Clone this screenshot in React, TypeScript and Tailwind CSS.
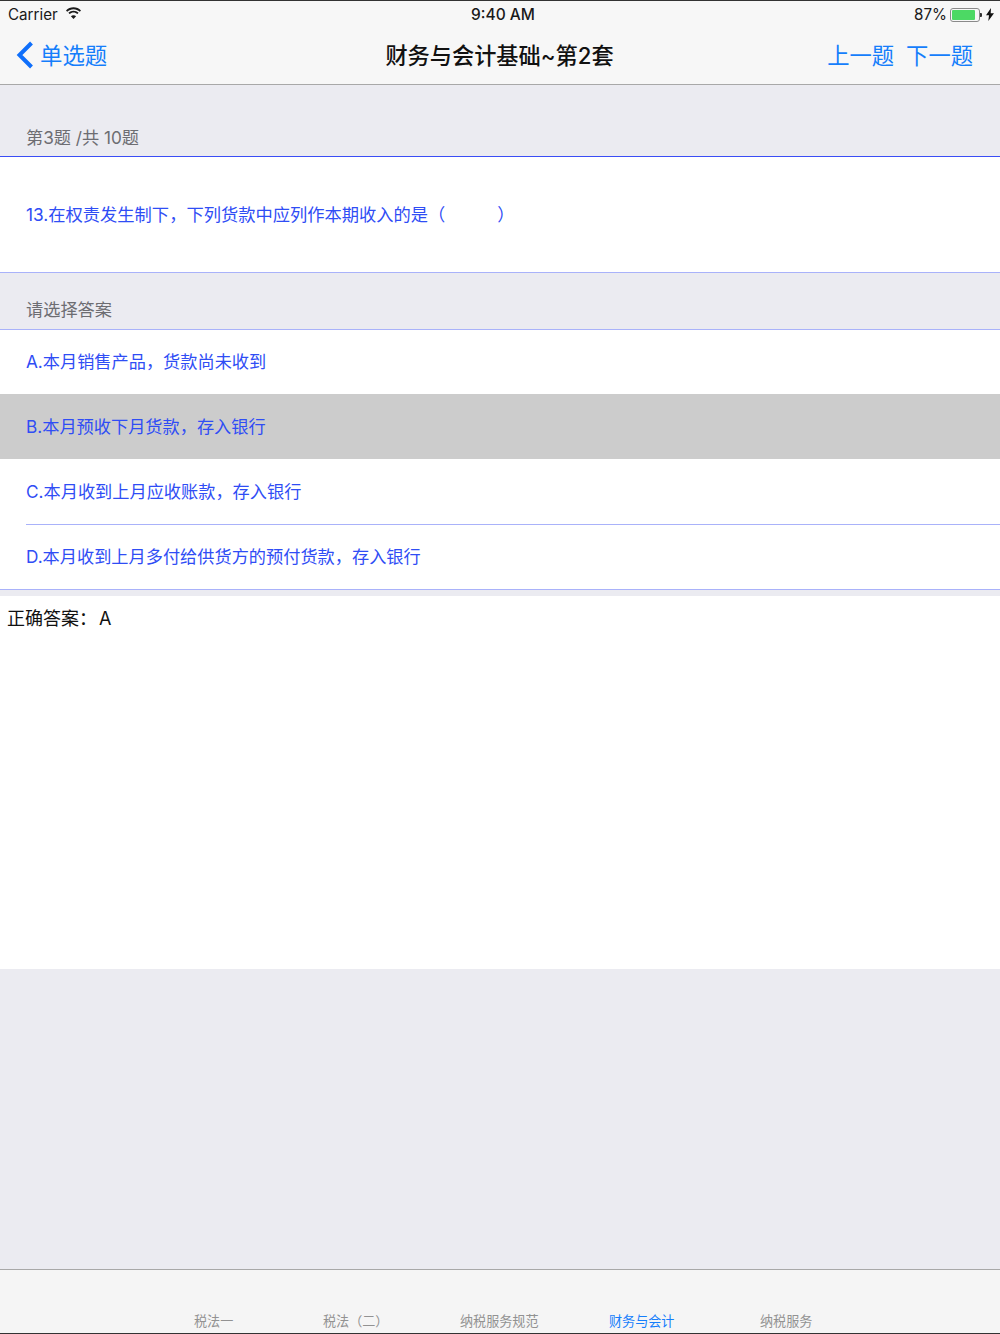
const FONT = "font-['Inter','Noto_Sans_CJK_SC',sans-serif]"

const TABS = [
  { label: '税法一', width: 'w-[40px]', active: false },
  { label: '税法（二）', width: 'w-[64px]', active: false },
  { label: '纳税服务规范', width: 'w-[80px]', active: false },
  { label: '财务与会计', width: 'w-[68px]', active: true },
  { label: '纳税服务', width: 'w-[54px]', active: false },
]

function StatusBar() {
  return (
    <div className="h-[28px] flex items-center justify-between pl-[8px] pr-[6px] text-[15.2px] text-[#1a1a1a]">
      <div className="flex items-center gap-[7px]">
        <span>Carrier</span>
        <svg width="17" height="13" viewBox="0 0 17 13" fill="#1a1a1a" className="-mt-[2px]">
          <path d="M8.5 2.2c2.4 0 4.6.9 6.3 2.5l1.2-1.3C14 1.4 11.4.3 8.5.3S3 1.4 1 3.4l1.2 1.3c1.7-1.6 3.9-2.5 6.3-2.5z" />
          <path d="M8.5 5.6c1.5 0 2.8.6 3.9 1.5l1.2-1.3c-1.4-1.3-3.2-2.1-5.1-2.1S4.800 4.500 3.400 5.800l1.200 1.300c1.100-.9 2.400-1.500 3.900-1.500z" />
          <path d="M8.500 8.300c-1 0-1.900.4-2.600 1l2.600 2.800 2.600-2.800c-.7-.6-1.600-1-2.600-1z" />
        </svg>
      </div>
      <span className="absolute left-[471px] text-[15.500px] font-medium">9:40 AM</span>
      <div className="flex items-center">
        <span>87%</span>
        <div className="ml-[3px] w-[30px] h-[14px] rounded-[3px] border border-[#8a8a8a] p-[1px]">
          <div className="h-full w-[87%] rounded-[1px] bg-[#4cd964]" />
        </div>
        <div className="w-[2px] h-[4px] bg-[#333] rounded-r-[1px] mr-[4px]" />
        <svg width="8" height="13" viewBox="0 0 8 13" fill="#111">
          <path d="M5 0 0 7.300h3L2.300 13 8 5.200H4.700L5 0z" />
        </svg>
      </div>
    </div>
  )
}

function NavBar() {
  return (
    <div className="relative h-[56px] flex items-center justify-between pb-[3px] pl-[16px] pr-[27px]">
      <div className="flex items-center gap-[6px] text-[22.400px] text-[#157efb]">
        <svg width="18" height="28" viewBox="0 0 18 28" fill="none" stroke="#0f6ffb" strokeWidth="4">
          <path d="M15.500 2 3.500 14l12 12" />
        </svg>
        <span>单选题</span>
      </div>
      <span className="absolute left-0 right-0 text-center text-[22.200px] font-medium text-[#111] -ml-[1px]">
        财务与会计基础~第2套
      </span>
      <div className="flex gap-[12px] text-[22.300px] text-[#157efb]">
        <span>上一题</span>
        <span>下一题</span>
      </div>
    </div>
  )
}

function OptionRow({ text, height, selected, divider }: { text: string; height: string; selected?: boolean; divider?: boolean }) {
  return (
    <div className={`${height} ${selected ? 'bg-[#cccccc]' : 'bg-white'} pl-[26px]`}>
      <div className={`h-full flex items-center text-[17.200px] text-[#2f4df5] ${divider ? 'border-b border-[#a9b2fa]' : ''}`}>
        {text}
      </div>
    </div>
  )
}

export default function App() {
  return (
    <div className={`relative w-[1000px] h-[1334px] flex flex-col bg-[#ebebf1] overflow-hidden ${FONT}`}>
      <div className="h-[85px] shrink-0 bg-[#f7f7f7] border-t border-b border-t-[#333] border-b-[#a8a8a8]">
        <StatusBar />
        <NavBar />
      </div>

      <div className="h-[72px] shrink-0 flex items-end pl-[26px] pb-[5px] text-[17.200px] text-[#6d6d72] border-b border-[#3a4df5]">
        第3题 /共 10题
      </div>
      <div className="h-[116px] shrink-0 bg-white flex items-center pl-[26px] pt-[1px] text-[17.280px] text-[#2f4df5] border-b border-[#a9b2fa]">
        13.在权责发生制下，下列货款中应列作本期收入的是（&emsp;&emsp;&emsp;）
      </div>
      <div className="h-[57px] shrink-0 flex items-end pl-[26px] pb-[6px] text-[17.200px] text-[#6d6d72] border-b border-[#a9b2fa]">
        请选择答案
      </div>

      <div className="shrink-0 border-b border-[#a9b2fa]">
        <OptionRow height="h-[64px]" text="A.本月销售产品，货款尚未收到" />
        <OptionRow height="h-[65px]" text="B.本月预收下月货款，存入银行" selected />
        <OptionRow height="h-[66px]" text="C.本月收到上月应收账款，存入银行" divider />
        <div className="h-[64px] bg-white pl-[26px] flex items-center text-[17.200px] text-[#2f4df5]">
          D.本月收到上月多付给供货方的预付货款，存入银行
        </div>
      </div>

      <div className="h-[373px] mt-[6px] shrink-0 bg-white pl-[7px] pt-[9px] text-[18px] text-[#111]">
        正确答案：<span className="ml-[2px]">A</span>
      </div>

      <div className="flex-1" />

      <div className="h-[65px] shrink-0 relative bg-[#f5f5f5] border-t border-b border-t-[#a8a8a8] border-b-[#333] text-[13.100px] text-[#929292]">
        <div className="absolute left-[194px] top-[42px] flex leading-[18px]">
          {TABS.map((tab, i) => (
            <span
              key={tab.label}
              className={`${tab.width} whitespace-nowrap ${tab.active ? 'text-[#157efb]' : ''} ${i === 0 ? 'mr-[89px]' : i === 1 ? 'mr-[73px]' : i === 2 ? 'mr-[69px]' : i === 3 ? 'mr-[83px]' : ''}`}
            >
              {tab.label}
            </span>
          ))}
        </div>
      </div>
    </div>
  )
}
